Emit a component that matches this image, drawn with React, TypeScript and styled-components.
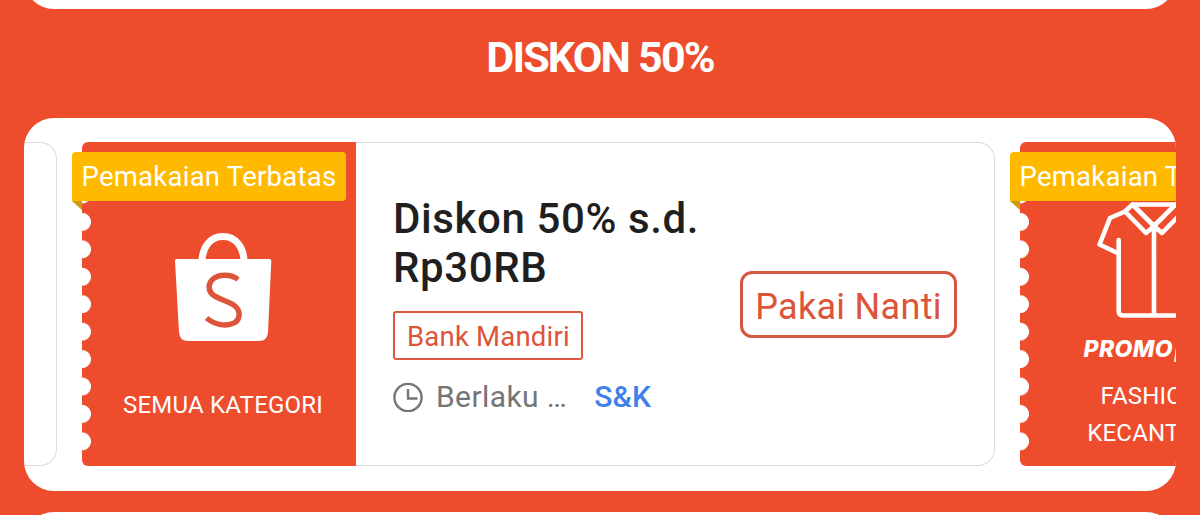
import React from 'react'
import styled, { createGlobalStyle } from 'styled-components'

const GlobalStyle = createGlobalStyle`
    * {
        box-sizing: border-box;
    }

    body {
        margin: 0;
        background: #ee4d2d;
        font-family: Roboto, "Liberation Sans", sans-serif;
    }
`

const Page = styled.div`
    display: flex;
    flex-direction: column;
    width: 1200px;
    height: 515px;
    padding: 0 24px;
    overflow: hidden;
    background: #ee4d2d;
`

const PanelEnd = styled.div`
    flex: none;
    height: 9px;
    overflow: hidden;
    display: flex;
    align-items: flex-end;

    &::before {
        content: "";
        flex: 1;
        height: 60px;
        border-radius: 30px;
        background: white;
    }
`

const PanelStart = styled.div`
    flex: none;
    height: 60px;
    margin-top: 20.5px;
    border-radius: 30px;
    background: white;
`

const Heading = styled.h1`
    flex: none;
    margin: 0;
    height: 109px;
    line-height: 97px;
    text-align: center;
    font-size: 43px;
    font-weight: 700;
    letter-spacing: -1.8px;
    color: white;
`

const Panel = styled.div`
    flex: none;
    display: flex;
    gap: 25px;
    height: 373px;
    padding: 24px 0 25px;
    border-radius: 30px;
    overflow: hidden;
    background: white;
`

const CardEnd = styled.div`
    flex: none;
    width: 33px;
    border: 1.5px solid #d9dbdd;
    border-left: none;
    border-radius: 0 17px 17px 0;
`

const Card = styled.div`
    position: relative;
    flex: none;
    display: flex;
    width: 913px;
`

// the plain strips at both ends keep the corners free of notches
const Stub = styled.div`
    flex: none;
    display: flex;
    flex-direction: column;
    align-items: center;
    width: 274px;
    padding: 90px 0 0 7px;
    border-radius: 6px 0 0 6px;
    background-color: #ee4d2d;
    background-image:
        linear-gradient(#ee4d2d, #ee4d2d),
        linear-gradient(#ee4d2d, #ee4d2d),
        radial-gradient(circle at 0 50%, white 8.6px, transparent 9.3px);
    background-size: 20px 12px, 20px 12px, 20px 27.45px;
    background-position: 0 0, 0 100%, 0 11.3px;
    background-repeat: no-repeat, no-repeat, repeat-y;
`

const Ribbon = styled.div`
    position: absolute;
    top: 10px;
    left: -10px;
    width: 274px;
    height: 49px;
    padding-left: 9.5px;
    border-radius: 4px 4px 4px 0;
    background: #ffba00;
    color: white;
    font-size: 27.5px;
    line-height: 50px;
    letter-spacing: 0.25px;
    white-space: nowrap;

    &::after {
        content: "";
        position: absolute;
        top: 49px;
        left: 0;
        border-top: 9px solid #cf9a0c;
        border-left: 10px solid transparent;
    }
`

const Category = styled.div<{ gap: number }>`
    margin-top: ${p => p.gap}px;
    padding-left: 1px;
    text-align: center;
    font-size: 24px;
    line-height: 36.5px;
    letter-spacing: 0.2px;
    white-space: nowrap;
    color: white;
`

const Promo = styled.div`
    display: flex;
    align-items: center;
    width: 154px;
    margin-top: 16px;
    font-family: Inter, Roboto, sans-serif;
    font-size: 23px;
    font-weight: 800;
    font-style: italic;
    line-height: 30px;
    letter-spacing: 0.4px;
    white-space: nowrap;
    color: white;
`

const PromoBadge = styled.span`
    width: 60px;
    height: 16px;
    margin: 10px 0 0 2px;
    background: #fff0c4;
    transform: skewX(-8deg);
`

const Body = styled.div`
    flex: 1;
    display: flex;
    align-items: center;
    justify-content: space-between;
    padding: 0 37px;
    border: 1.5px solid #d9dbdd;
    border-left: none;
    border-radius: 0 17px 17px 0;
`

const Info = styled.div`
    width: 330px;
`

const Title = styled.div`
    font-size: 42px;
    font-weight: 500;
    line-height: 49px;
    letter-spacing: 0.6px;
    color: #1f1f1f;
`

const Tag = styled.div`
    display: inline-block;
    height: 49px;
    margin-top: 19px;
    padding: 0 11.5px 0 12px;
    border: 2px solid #dc5a40;
    border-radius: 3px;
    font-size: 27.5px;
    line-height: 48px;
    letter-spacing: 0.2px;
    color: #dc5439;
`

const Validity = styled.div`
    display: flex;
    align-items: center;
    height: 36px;
    margin-top: 18px;
    font-size: 30px;
    letter-spacing: 0.4px;
    color: #757575;
`

const Period = styled.span`
    margin-left: 12px;
`

const Terms = styled.span`
    margin-left: 27px;
    font-weight: 500;
    letter-spacing: 0.2px;
    color: #4080e8;
`

const UseButton = styled.button`
    width: 217px;
    height: 67px;
    padding: 5px 0 0;
    border: 3px solid #d4573f;
    border-radius: 12px;
    background: white;
    font-family: inherit;
    font-size: 36px;
    letter-spacing: 0.3px;
    color: #dc5439;
`

const Shirt = styled.svg`
    flex: none;
    margin: -32px 13px 0 0;
`

const BagIcon: React.FC = () => (
    <svg width="98" height="110" viewBox="0 0 98 110" fill="none">
        <path d="M28 30 C28 15 36.500 4.500 49 4.500 C61.500 4.500 70 15 70 30" stroke="white" strokeWidth="7" />
        <path d="M2.500 27 H95.500 Q97.500 27 97.300 29 L94 100 Q93.500 109 85 109 H14 Q5.500 109 5 100 L1 29 Q1 27 2.500 27 Z" fill="white" />
        <path
            d="M64 47.500 C57 42 45 42 39 47 C34 51 34 58 38 62 C43 67 55 69 61 74 C67 79 66 87 61 90.500 C53 95 41 93 32.500 86"
            stroke="#dc5439"
            strokeWidth="5.4"
        />
    </svg>
)

const ShirtIcon: React.FC = () => (
    <Shirt width="116" height="118" viewBox="0 0 116 118" fill="none" stroke="white" strokeWidth="4.6" strokeLinejoin="round" strokeLinecap="round">
        <path d="M22.700 40 V111 Q22.700 115.500 27 115.500 H89 Q93.300 115.500 93.300 111 V40" />
        <path d="M21.500 53 L3.500 44.500 L14 18 L29 11.500 L36.500 4.500 H79.500 L87 11.500 L102 18 L112.500 44.500 L94.500 53" />
        <path d="M58 24 V115 M36.500 4.500 L58 26 L79.500 4.500 M29 11.500 L50 33 L57 27 M87 11.500 L66 33 L59 27" />
    </Shirt>
)

const ClockIcon: React.FC = () => (
    <svg width="31" height="32" viewBox="0 0 31 32" fill="none" stroke="#757575" strokeWidth="2.4">
        <circle cx="15" cy="17.500" r="13.600" />
        <path d="M15 9 V18.500 H24.500" />
    </svg>
)

const App: React.FC = () => {
    return (
        <>
            <GlobalStyle />
            <Page>
                <PanelEnd />
                <Heading>DISKON 50%</Heading>
                <Panel>
                    <CardEnd />
                    <Card>
                        <Stub>
                            <BagIcon />
                            <Category gap={44.5}>SEMUA KATEGORI</Category>
                        </Stub>
                        <Body>
                            <Info>
                                <Title>Diskon 50% s.d. Rp30RB</Title>
                                <Tag>Bank Mandiri</Tag>
                                <Validity>
                                    <ClockIcon />
                                    <Period>Berlaku …</Period>
                                    <Terms>S&amp;K</Terms>
                                </Validity>
                            </Info>
                            <UseButton>Pakai Nanti</UseButton>
                        </Body>
                        <Ribbon>Pemakaian Terbatas</Ribbon>
                    </Card>
                    <Card>
                        <Stub>
                            <ShirtIcon />
                            <Promo>
                                PROMO
                                <PromoBadge />
                            </Promo>
                            <Category gap={14}>FASHION &amp;<br />KECANTIKAN</Category>
                        </Stub>
                        <Ribbon>Pemakaian Terbatas</Ribbon>
                    </Card>
                </Panel>
                <PanelStart />
            </Page>
        </>
    )
}

export default App
